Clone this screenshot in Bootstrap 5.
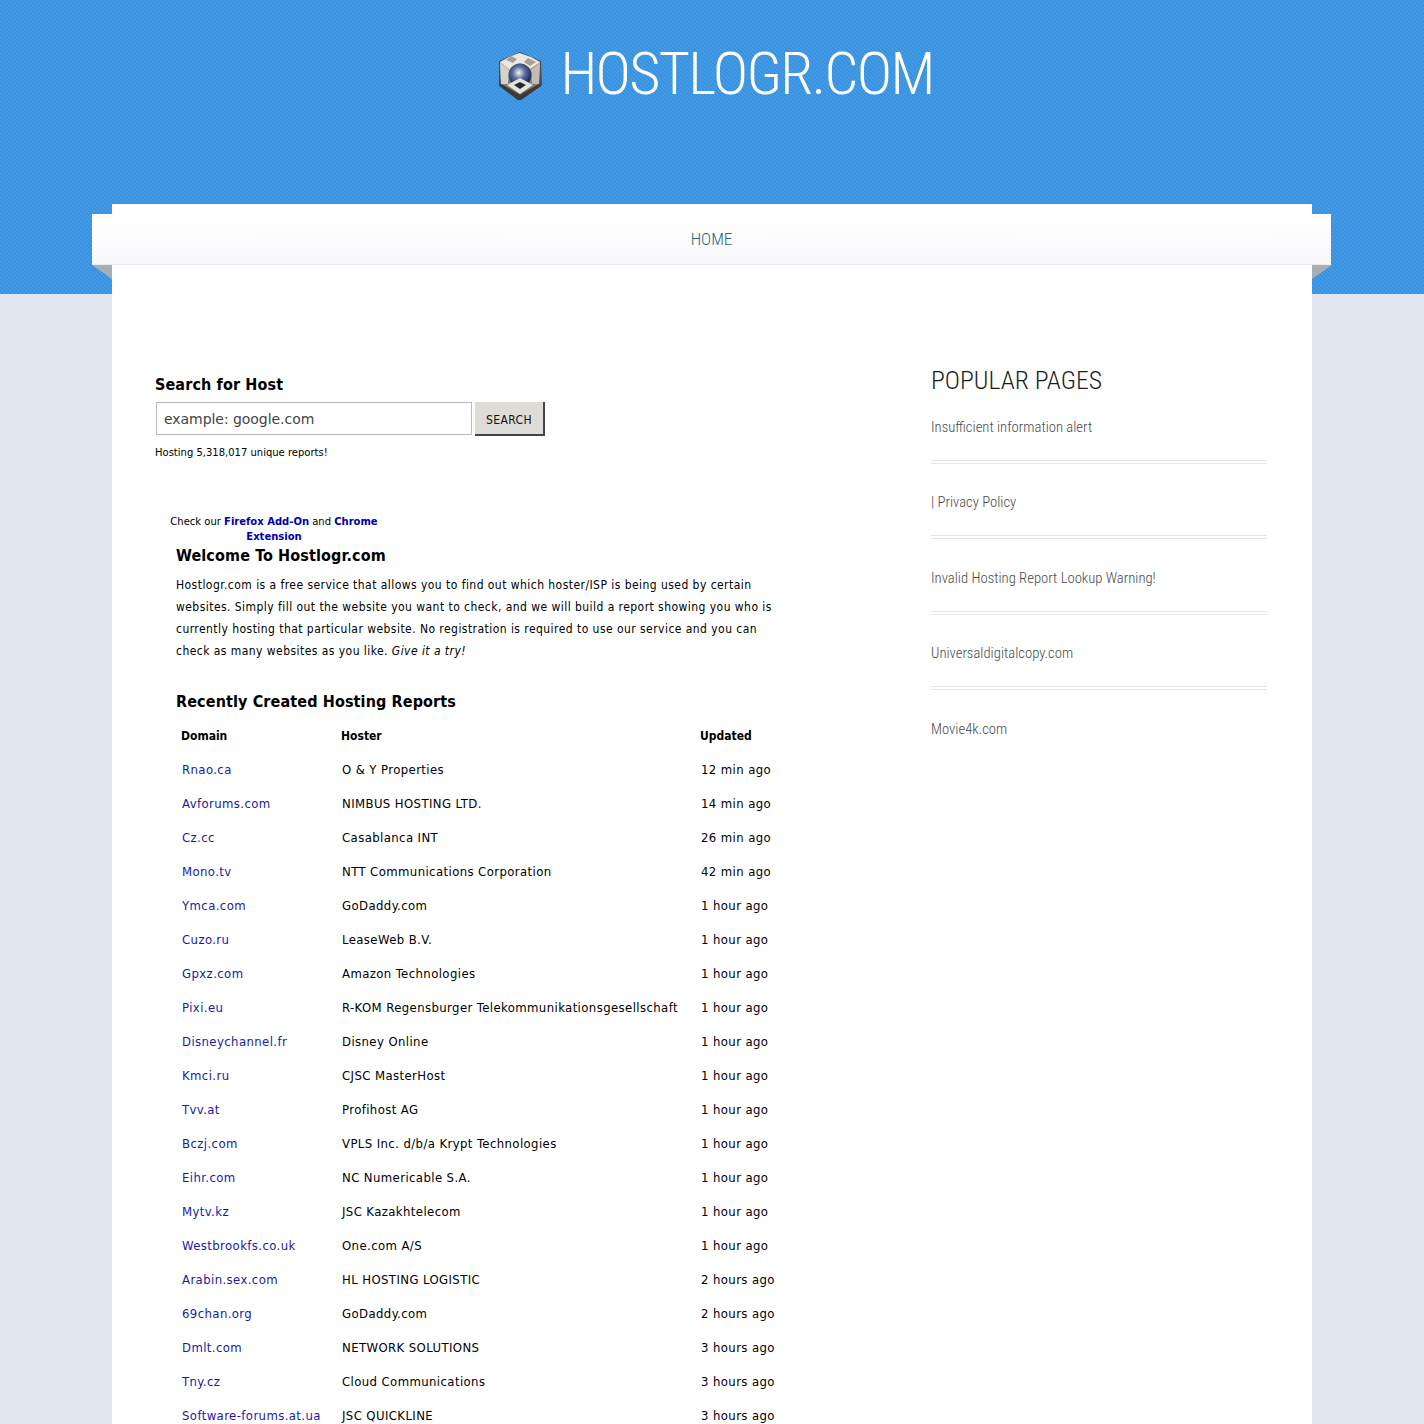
<!DOCTYPE html>
<html lang="en"><head><meta charset="utf-8"><title>Hostlogr.com</title>
<link href="https://cdn.jsdelivr.net/npm/bootstrap@5.3.0/dist/css/bootstrap.min.css" rel="stylesheet">
<style>
html,body{height:1424px;overflow:hidden}
body{font-family:"DejaVu Sans",sans-serif;color:#000;font-size:12px;background:linear-gradient(45deg,#dfe4ee 25%,#e6eaf3 25%,#e6eaf3 50%,#dfe4ee 50%,#dfe4ee 75%,#e6eaf3 75%) 0 0/4px 4px}
.hl-band{position:absolute;left:0;right:0;top:0;height:294px;background:linear-gradient(45deg,#3891de 25%,#459be5 25%,#459be5 50%,#3891de 50%,#3891de 75%,#459be5 75%) 0 0/4px 4px}
.hl-cond{font-family:"Roboto Condensed","Roboto",sans-serif;font-weight:300}
.hl-head{position:relative;height:204px;padding:40px 0 0 7px;color:#fff}
.hl-title{font-size:60px;line-height:68px;margin:0;font-weight:300;letter-spacing:-1.65px;white-space:nowrap}
.hl-logo{width:46px;height:50px;margin:11px 17px 0 0}
.hl-wrap{width:1200px;margin:0 auto;background:#fff;height:1220px;position:relative}
.hl-nav{position:absolute;left:-20px;right:-19px;top:10px;height:51px;border-bottom:1px solid #e9ebef;
background:linear-gradient(rgba(255,255,255,1) 10%,rgba(255,255,255,.3)),linear-gradient(45deg,#eef1f6 25%,#fafbfd 25%,#fafbfd 50%,#eef1f6 50%,#eef1f6 75%,#fafbfd 75%) 0 0/4px 4px}
.hl-nav a{font-size:17px;color:#2c6476;text-decoration:none;line-height:50px;display:inline-block}
.hl-fold{position:absolute;top:61px;width:20px;height:14px;background:#a9aeb2}
.hl-fold-l{left:-20px;clip-path:polygon(0 0,100% 0,100% 100%)}
.hl-fold-r{right:-20px;clip-path:polygon(0 0,100% 0,0 100%)}
.hl-main{padding:170px 0 0 43px}
.hl-left{width:776px}
.hl-side{width:336px;margin-top:-10px}
.hl-h{font-weight:700;font-size:16px;line-height:20px;margin:0;letter-spacing:.12px;font-family:"DejaVu Sans Condensed","DejaVu Sans",sans-serif}
.hl-h-first{margin-top:1px}
.hl-h-welcome{margin-top:2px}
.hl-input{width:316px;height:33px;margin:7px 0 0 1px;border:1px solid #bbb;padding:0 7px;font-size:14px;line-height:31px;color:#444;font-family:"DejaVu Sans",sans-serif;letter-spacing:-.05px;border-radius:0;outline:0}
.hl-input::placeholder{color:#444;opacity:1}
.hl-btn{width:70px;height:34px;margin:7px 0 0 3px;padding:3px 0 0;background:#dedcd6;border:0;border-right:2px solid #444;border-bottom:2px solid #444;border-radius:0;font-size:12px;color:#111;font-family:"DejaVu Sans Condensed","DejaVu Sans",sans-serif;letter-spacing:.4px}
.hl-count{font-size:10px;margin:10px 0 0;line-height:14px}
.hl-ext{width:238px;margin:54px 0 0;text-align:center;font-size:10px;line-height:15px}
.hl-ext a{color:#00a;font-weight:700;text-decoration:none}
.hl-body{padding-left:21px}
.hl-body p{font-size:12px;line-height:22px;margin:8px 0 0;width:606px;letter-spacing:.45px;font-family:"DejaVu Sans Condensed","DejaVu Sans",sans-serif}
.hl-h2{margin-top:30px}
.hl-tbl{width:600px;table-layout:fixed;margin-top:7px;font-size:13px;border-collapse:separate;border-spacing:0;font-family:"DejaVu Sans Condensed","DejaVu Sans",sans-serif}
.hl-tbl th{font-size:12px;font-weight:700;padding:0 5px;height:34px;white-space:nowrap}
.hl-tbl td{padding:0 6px;height:34px;white-space:nowrap;letter-spacing:.4px}
.hl-tbl a{color:#1a1aa6;text-decoration:none}
.hl-c1{width:160px}.hl-c2{width:359px}
.hl-pop{font-size:25.7px;line-height:32px;margin:0;color:#1c1c1c;white-space:nowrap;font-weight:300}
.hl-list{margin-top:20.5px}
.hl-list a{display:block;font-size:14.7px;line-height:20px;color:#4a4a4a;white-space:nowrap;text-decoration:none;font-weight:300}
.hl-sep{height:4px;border-top:1px solid #e5e5e5;border-bottom:1px solid #e5e5e5;margin:23px 0 28.5px}
</style></head><body>
<div class="hl-band"></div>
<header class="hl-head d-flex justify-content-center align-items-start">
<svg class="hl-logo flex-shrink-0" viewBox="0 0 46 50"><defs><radialGradient id="g" cx=".45" cy=".4" r=".6"><stop offset="0" stop-color="#f2f4f8"/><stop offset=".45" stop-color="#5c6f9c"/><stop offset="1" stop-color="#13224a"/></radialGradient><linearGradient id="h" x1="0" y1="0" x2="0" y2="1"><stop offset="0" stop-color="#b9b3a9"/><stop offset="1" stop-color="#6b675f"/></linearGradient></defs>
<path d="M23 1 44 10 45 34 24 49 21 49 2 35 2 10Z" fill="#4a4a4c"/>
<path d="M23 2 43 11 42 33 23 44 4 33 3 11Z" fill="url(#h)"/>
<path d="M22 2 34 6 43 11 33 18 23 12 13 19 3 11 12 6Z" fill="#ece8e1"/>
<path d="M14 5 20 8 16 12 9 9ZM31 7 39 11 33 15 27 11Z" fill="#a59f94"/>
<path d="M3 12 12 19 11 33 4 33Z" fill="#d8d3ca"/><path d="M43 12 34 19 35 33 42 33Z" fill="#c2bdb3"/>
<circle cx="23" cy="24" r="11.5" fill="url(#g)"/>
<path d="M10 34 23 27 36 34 23 43Z" fill="#e6e3dd"/><path d="M17 34 23 31 29 34 23 38Z" fill="#26282f"/>
<path d="M23 44 42 33 44 35 24 49 21 49 3 35 4 33Z" fill="#3c3b3a"/>
</svg>
<div><h1 class="hl-title hl-cond">HOSTLOGR.COM</h1></div>
</header>
<div class="hl-wrap">
<nav class="hl-nav text-center hl-cond"><a href="#">HOME</a></nav>
<span class="hl-fold hl-fold-l"></span><span class="hl-fold hl-fold-r"></span>
<div class="hl-main d-flex">
<main class="hl-left">
<h2 class="hl-h hl-h-first">Search for Host</h2>
<form class="d-flex align-items-start"><input class="hl-input" placeholder="example: google.com"><button type="button" class="hl-btn">SEARCH</button></form>
<p class="hl-count">Hosting 5,318,017 unique reports!</p>
<div class="hl-ext">Check our <a href="#">Firefox Add-On</a> and <a href="#">Chrome Extension</a></div>
<div class="hl-body">
<h2 class="hl-h hl-h-welcome">Welcome To Hostlogr.com</h2>
<p>Hostlogr.com is a free service that allows you to find out which hoster/ISP is being used by certain websites. Simply fill out the website you want to check, and we will build a report showing you who is currently hosting that particular website. No registration is required to use our service and you can check as many websites as you like. <em>Give it a try!</em></p>
<h2 class="hl-h hl-h2">Recently Created Hosting Reports</h2>
<table class="hl-tbl"><colgroup><col class="hl-c1"><col class="hl-c2"><col></colgroup><thead><tr><th>Domain</th><th>Hoster</th><th>Updated</th></tr></thead><tbody>
<tr><td><a href="#">Rnao.ca</a></td><td>O &amp; Y Properties</td><td>12 min ago</td></tr>
<tr><td><a href="#">Avforums.com</a></td><td>NIMBUS HOSTING LTD.</td><td>14 min ago</td></tr>
<tr><td><a href="#">Cz.cc</a></td><td>Casablanca INT</td><td>26 min ago</td></tr>
<tr><td><a href="#">Mono.tv</a></td><td>NTT Communications Corporation</td><td>42 min ago</td></tr>
<tr><td><a href="#">Ymca.com</a></td><td>GoDaddy.com</td><td>1 hour ago</td></tr>
<tr><td><a href="#">Cuzo.ru</a></td><td>LeaseWeb B.V.</td><td>1 hour ago</td></tr>
<tr><td><a href="#">Gpxz.com</a></td><td>Amazon Technologies</td><td>1 hour ago</td></tr>
<tr><td><a href="#">Pixi.eu</a></td><td>R-KOM Regensburger Telekommunikationsgesellschaft</td><td>1 hour ago</td></tr>
<tr><td><a href="#">Disneychannel.fr</a></td><td>Disney Online</td><td>1 hour ago</td></tr>
<tr><td><a href="#">Kmci.ru</a></td><td>CJSC MasterHost</td><td>1 hour ago</td></tr>
<tr><td><a href="#">Tvv.at</a></td><td>Profihost AG</td><td>1 hour ago</td></tr>
<tr><td><a href="#">Bczj.com</a></td><td>VPLS Inc. d/b/a Krypt Technologies</td><td>1 hour ago</td></tr>
<tr><td><a href="#">Eihr.com</a></td><td>NC Numericable S.A.</td><td>1 hour ago</td></tr>
<tr><td><a href="#">Mytv.kz</a></td><td>JSC Kazakhtelecom</td><td>1 hour ago</td></tr>
<tr><td><a href="#">Westbrookfs.co.uk</a></td><td>One.com A/S</td><td>1 hour ago</td></tr>
<tr><td><a href="#">Arabin.sex.com</a></td><td>HL HOSTING LOGISTIC</td><td>2 hours ago</td></tr>
<tr><td><a href="#">69chan.org</a></td><td>GoDaddy.com</td><td>2 hours ago</td></tr>
<tr><td><a href="#">Dmlt.com</a></td><td>NETWORK SOLUTIONS</td><td>3 hours ago</td></tr>
<tr><td><a href="#">Tny.cz</a></td><td>Cloud Communications</td><td>3 hours ago</td></tr>
<tr><td><a href="#">Software-forums.at.ua</a></td><td>JSC QUICKLINE</td><td>3 hours ago</td></tr>
</tbody></table>
</div>
</main>
<aside class="hl-side hl-cond">
<h2 class="hl-pop hl-cond">POPULAR PAGES</h2>
<div class="hl-list">
<a href="#">Insufficient information alert</a><div class="hl-sep"></div>
<a href="#">| Privacy Policy</a><div class="hl-sep"></div>
<a href="#">Invalid Hosting Report Lookup Warning!</a><div class="hl-sep"></div>
<a href="#">Universaldigitalcopy.com</a><div class="hl-sep"></div>
<a href="#">Movie4k.com</a>
</div>
</aside>
</div>
</div>
</body></html>
